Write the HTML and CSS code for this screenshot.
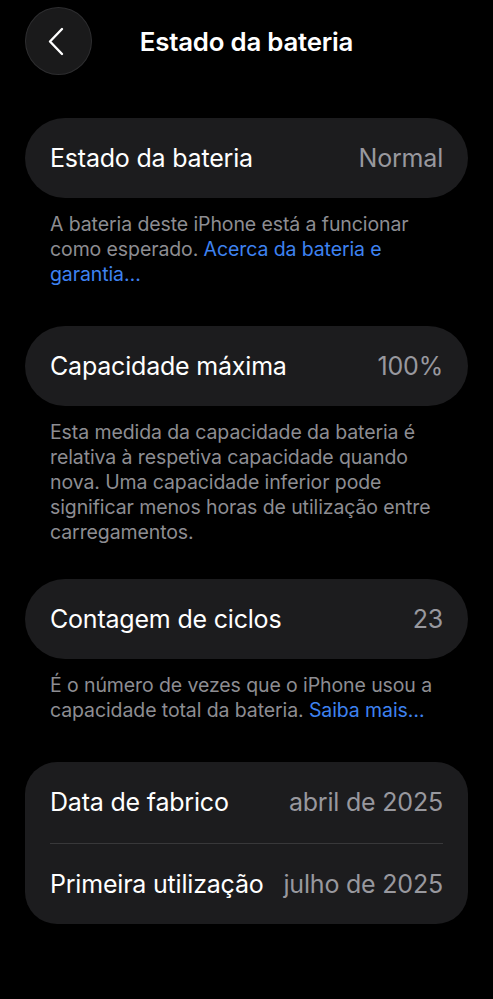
FILE: index.html
```html
<!DOCTYPE html>
<html lang="pt">
<head>
<meta charset="utf-8">
<title>Estado da bateria</title>
<link rel="stylesheet" href="styles.css">
</head>
<body>
<div class="screen">
  <header class="nav">
    <button class="back" aria-label="Voltar">
      <svg width="18" height="29" viewBox="0 0 18 29" fill="none"><path d="M15 2 L3 14.5 L15 27" stroke="#ffffff" stroke-width="2.4" stroke-linecap="round" stroke-linejoin="round"/></svg>
    </button>
    <h1 class="title">Estado da bateria</h1>
  </header>

  <section class="group g1">
    <div class="card pill">
      <div class="row"><span class="label">Estado da bateria</span><span class="value">Normal</span></div>
    </div>
    <p class="note">A bateria deste iPhone está a funcionar como esperado. <span class="link">Acerca da bateria e garantia…</span></p>
  </section>

  <section class="group g2">
    <div class="card pill">
      <div class="row"><span class="label">Capacidade máxima</span><span class="value">100%</span></div>
    </div>
    <p class="note">Esta medida da capacidade da bateria é relativa à respetiva capacidade quando nova. Uma capacidade inferior pode significar menos horas de utilização entre carregamentos.</p>
  </section>

  <section class="group g3">
    <div class="card pill">
      <div class="row"><span class="label">Contagem de ciclos</span><span class="value">23</span></div>
    </div>
    <p class="note">É o número de vezes que o iPhone usou a capacidade total da bateria. <span class="link">Saiba mais…</span></p>
  </section>

  <section class="group">
    <div class="card rounded">
      <div class="row tall"><span class="label">Data de fabrico</span><span class="value">abril de 2025</span></div>
      <div class="divider"></div>
      <div class="row tall"><span class="label">Primeira utilização</span><span class="value">julho de 2025</span></div>
    </div>
  </section>
</div>
</body>
</html>
```

FILE: styles.css
```css
html, body {
  margin: 0;
  padding: 0;
  background: #000000;
}
body {
  font-family: Inter, "Noto Sans", "Liberation Sans", sans-serif;
  color: #ffffff;
  -webkit-font-smoothing: antialiased;
}
.screen {
  width: 493px;
  height: 999px;
  box-sizing: border-box;
  padding: 7px 25px 0 25px;
  display: flex;
  flex-direction: column;
}
.nav {
  position: relative;
  height: 68px;
  display: flex;
  align-items: center;
  justify-content: center;
  margin-bottom: 43px;
}
.back {
  position: absolute;
  left: 0;
  top: 0;
  width: 67px;
  height: 68px;
  border-radius: 50%;
  background: #1a1a1b;
  border: 1px solid #2e2e30;
  box-sizing: border-box;
  display: flex;
  align-items: center;
  justify-content: center;
  padding: 0 6px 0 0;
  cursor: pointer;
}
.title {
  margin: 0;
  font-size: 25.8px;
  font-weight: 600;
  letter-spacing: -0.2px;
  color: #ffffff;
}
.group {
  display: flex;
  flex-direction: column;
  margin-bottom: 37px;
}
.g1 {
  margin-bottom: 39px;
}
.g2 {
  margin-bottom: 34px;
}
.g3 {
  margin-bottom: 39px;
}
.card {
  background: #1c1c1e;
  padding: 0 25px;
}
.pill {
  border-radius: 40px;
}
.rounded {
  border-radius: 32px;
}
.row {
  height: 80px;
  display: flex;
  align-items: center;
  justify-content: space-between;
  gap: 14px;
}
.row.tall {
  height: 80.5px;
}
.label {
  font-size: 25px;
  font-weight: 400;
  color: #ffffff;
  letter-spacing: -0.2px;
  white-space: nowrap;
}
.value {
  font-size: 25px;
  color: #98989e;
  letter-spacing: -0.2px;
  white-space: nowrap;
}
.divider {
  height: 1px;
  background: #38383a;
}
.note {
  margin: 14px 0 0 0;
  padding: 0 25px;
  font-size: 19.5px;
  line-height: 25px;
  color: #8d8d92;
  letter-spacing: -0.1px;
}
.link {
  color: #3e82f0;
}
```
